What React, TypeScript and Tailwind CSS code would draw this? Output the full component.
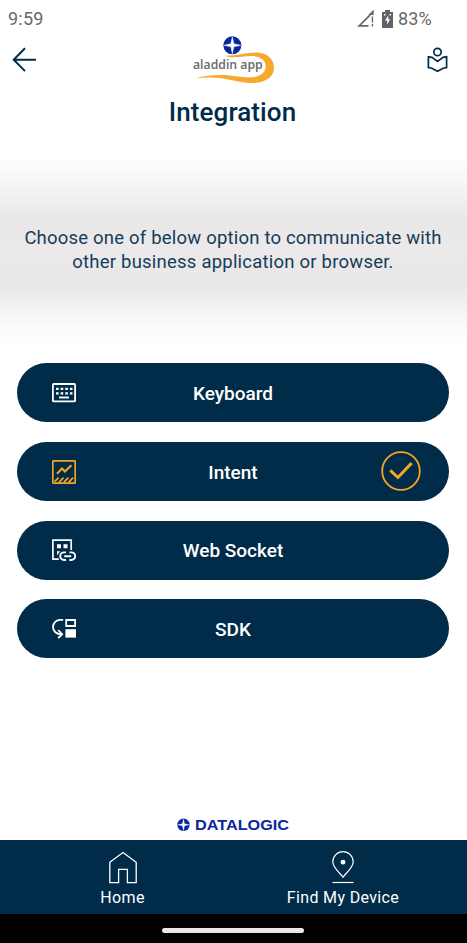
import type { ReactNode } from "react";

const NAVY = "#002b49";
const AMBER = "#f5a623";

function StarBadge({ cx, cy, r }: { cx: number; cy: number; r: number }) {
  const a = r * 0.94;
  const b = r * 0.17;
  return (
    <g>
      <circle cx={cx} cy={cy} r={r} fill="#07289c" />
      <path
        d={`M${cx} ${cy - a}L${cx + b} ${cy - b}L${cx + a} ${cy}L${cx + b} ${cy + b}L${cx} ${cy + a}L${cx - b} ${cy + b}L${cx - a} ${cy}L${cx - b} ${cy - b}Z`}
        fill="#fff"
        stroke="#fff"
        strokeWidth={r * 0.05}
      />
    </g>
  );
}

function AladdinLogo() {
  return (
    <svg className="h-[65px] w-[120px]" viewBox="0 0 360 195">
      <path
        d="M165 92C200 93 236 81 268 83C298 86 312 108 312 128C312 157 284 174 245 174C190 173 165 150 76 160C152 139 195 158 243 157C274 156 288 140 287 122C286 103 268 93 242 93C215 94 188 101 165 92Z"
        fill="#f7a92d"
      />
      <StarBadge cx={187} cy={61} r={27} />
      <text
        x="69"
        y="133"
        textLength="209"
        lengthAdjust="spacingAndGlyphs"
        fill="#68686b"
        className="font-['Open_Sans',sans-serif] text-[37px] font-semibold"
      >
        aladdin app
      </text>
    </svg>
  );
}

function KeyboardIcon() {
  return (
    <svg className="h-[24px] w-[24px]" viewBox="0 0 24 24" fill="none" stroke="#fff">
      <rect x=".9" y="3" width="22.2" height="17.4" rx="1" strokeWidth="1.8" />
      <path d="M4 7.8h16.5M4 12.3h16.5" strokeWidth="2.3" strokeDasharray="2.6 2.03" />
      <path d="M7 16.5h10" strokeWidth="1.9" />
    </svg>
  );
}

function IntentIcon() {
  return (
    <svg className="h-[24px] w-[24px]" viewBox="0 0 24 24" fill="none" stroke={AMBER}>
      <rect x=".8" y=".8" width="22.4" height="22.4" rx=".8" strokeWidth="1.7" />
      <path d="M5 13.8l5-5.3 2.9 3 6.5-6.3" strokeWidth="2" />
      <path d="M2.6 21.6l4-4M7 22.4l4.5-4.8M11.8 22.4l4.5-4.8M16.6 22.4l4.5-4.8" strokeWidth="1.7" />
    </svg>
  );
}

function WebSocketIcon() {
  return (
    <svg className="h-[24px] w-[24px]" viewBox="0 0 24 24" fill="none" stroke="#fff">
      <path d="M6.8 21.2H.9V2.1h18.3v9.8" strokeWidth="1.7" />
      <path d="M5 6.2h4v4H5zM11.5 6.2h4v4h-4zM5 13.2h3.3L5 17.2z" fill="#fff" stroke="none" />
      <path
        d="M14 14.4h-2a3.8 3.8 0 000 7.6h2M17.4 14.4h2a3.8 3.8 0 010 7.6h-2M12.2 18.2h7"
        strokeWidth="1.9"
      />
    </svg>
  );
}

function SdkIcon() {
  return (
    <svg className="h-[24px] w-[24px]" viewBox="0 0 24 24" fill="none" stroke="#fff">
      <path d="M11.2 2.9H9A7.1 7.1 0 001 9.8c0 4.6 3.5 7.4 8 7.4M6.2 13.1l4 4.1-4 4" strokeWidth="1.8" />
      <path d="M14.2 3h8.9v6h-8.9z" strokeWidth="1.8" />
      <path d="M13.4 12.2H24v8.4H13.4z" fill="#fff" stroke="none" />
    </svg>
  );
}

function OptionButton({ icon, label, selected }: { icon: ReactNode; label: ReactNode; selected?: boolean }) {
  return (
    <button className="grid h-[59px] w-full grid-cols-[59px_1fr_59px] items-center rounded-full bg-[#002b49] text-white">
      <span className="flex justify-end">{icon}</span>
      <span className="pt-[2px] text-center text-[19px] leading-6 font-medium">{label}</span>
      <span className="-ml-[9px] flex pb-[1px]">
        {selected && (
          <svg className="h-10 w-10" viewBox="0 0 40 40" fill="none" stroke={AMBER}>
            <circle cx="20" cy="20" r="18.8" strokeWidth="1.8" />
            <path d="M9.3 19.3l7.6 7.2 13.7-14.4" strokeWidth="3" />
          </svg>
        )}
      </span>
    </button>
  );
}

export default function App() {
  return (
    <div className="flex h-[943px] w-[467px] flex-col overflow-hidden bg-white font-[Roboto,sans-serif] text-[#002b49]">
      <div className="flex h-[37px] shrink-0 items-center justify-between pr-[35px] pl-[8px] text-[18px] text-[#68686a]">
        <span className="tracking-[0.2px]">9:59</span>
        <div className="flex items-center">
          <svg className="h-[18px] w-[18px]" viewBox="0 0 18 18" fill="none" stroke="#68686a">
            <path d="M11.5 15.8H2.2L13.2 4.8" strokeWidth="1.7" />
            <path d="M13 4.3L16 1.2V4.3zM15.4 6.5v6M15.4 14v2.4" strokeWidth="1.4" />
          </svg>
          <svg className="ml-[7px] h-[18px] w-[11px]" viewBox="0 0 11 18">
            <path d="M3 0h5v2h3v16H0V2h3z" fill="#626264" />
            <path d="M6.2 5.4L3 10.5h2.1v4l3.1-5.3H6.2zM2 4h1.5v1.5H2zM7.5 4H9v1.5H7.5z" fill="#fff" />
          </svg>
          <span className="ml-[5px] tracking-[0.2px]">83%</span>
        </div>
      </div>
      <header className="-mt-3 grid h-[65px] shrink-0 grid-cols-[1fr_120px_1fr] items-start pr-[18px] pl-[12px]">
        <svg className="mt-[22px] h-[26px] w-[26px]" viewBox="0 0 26 26" fill="none" stroke={NAVY} strokeWidth="2">
          <path d="M24 12.8H2M13 1.3L1.7 12.8 13 24.1" />
        </svg>
        <div className="-ml-[1px]">
          <AladdinLogo />
        </div>
        <svg
          className="mt-[22px] h-[26px] w-[23px] justify-self-end"
          viewBox="0 0 23 26"
          fill="none"
          stroke={NAVY}
          strokeWidth="1.7"
        >
          <circle cx="11.5" cy="5" r="3.7" />
          <path d="M2.4 9.8L6 10.4 11.5 14.4 17 10.4l3.6-.6v10.7l-3.4.7-5.7 3-5.7-3-3.4-.7z" />
        </svg>
      </header>
      <h1 className="mt-[6px] pr-[2px] text-center text-[26px] leading-8 font-medium tracking-[0.1px]">Integration</h1>
      <section className="mt-[27px] flex h-[188px] shrink-0 flex-col justify-center bg-[linear-gradient(to_bottom,#fff_0%,#f7f7f7_13%,#eeeded_27%,#e9e7e8_34%,#ebe9ea_50%,#e9e7e8_69%,#f1f1f1_79%,#fafafa_91%,#fff_100%)] pr-[1px] text-center text-[18.5px] leading-6 whitespace-nowrap">
        <p className="pt-[1px] tracking-[0.2px] opacity-90">Choose one of below option to communicate with</p>
        <p className="tracking-[0.22px] opacity-90">other business application or browser.</p>
      </section>
      <main className="mt-[20.4px] flex flex-col gap-[19.7px] pr-[18px] pl-[17px]">
        <OptionButton icon={<KeyboardIcon />} label="Keyboard" />
        <OptionButton icon={<IntentIcon />} label="Intent" selected />
        <OptionButton icon={<WebSocketIcon />} label="Web Socket" />
        <OptionButton icon={<SdkIcon />} label="SDK" />
      </main>
      <footer className="mt-auto shrink-0">
        <div className="flex h-[24px] justify-center pr-[2px]">
          <svg className="h-[18px] w-[114px]" viewBox="0 0 114 18">
            <StarBadge cx={7.5} cy={8.8} r={6.2} />
            <text
              x="19"
              y="14.3"
              textLength="94"
              lengthAdjust="spacingAndGlyphs"
              fill="#07289c"
              className="font-['Liberation_Sans',sans-serif] text-[15.5px] font-bold"
            >
              DATALOGIC
            </text>
          </svg>
        </div>
        <nav className="flex h-[74px] bg-[#002b49] text-[16px] leading-5 text-white">
          <a className="ml-[72px] flex w-[101px] flex-col items-center pt-[11px]">
            <svg className="h-[34px] w-[30px]" viewBox="0 0 30 34" fill="none" stroke="#fff" strokeWidth="1.3">
              <path d="M1.8 11.3L15 1.6l13.2 9.7v20.3h-8.8V18.3h-8.8v13.3H1.8z" />
            </svg>
            <span className="mt-[3px] tracking-[0.4px]">Home</span>
          </a>
          <a className="ml-[95px] flex w-[150px] flex-col items-center pt-[11px]">
            <svg className="h-[34px] w-[24px]" viewBox="0 0 24 34" fill="none" stroke="#fff" strokeWidth="1.2">
              <path d="M12 26.2C9.7 22.5 1.8 17.1 1.8 10.8a10.2 10.2 0 0120.4 0C22.2 17.1 14.3 22.5 12 26.2z" />
              <circle cx="12" cy="11.2" r="2.4" fill="#fff" stroke="none" />
              <path d="M1.5 31.5h21" />
            </svg>
            <span className="mt-[3px] tracking-[0.35px]">Find My Device</span>
          </a>
        </nav>
        <div className="flex h-[29px] items-center justify-center bg-black pt-[3px] pr-[2px]">
          <div className="h-[5px] w-[142px] rounded-full bg-[#e8e8e8]" />
        </div>
      </footer>
    </div>
  );
}
